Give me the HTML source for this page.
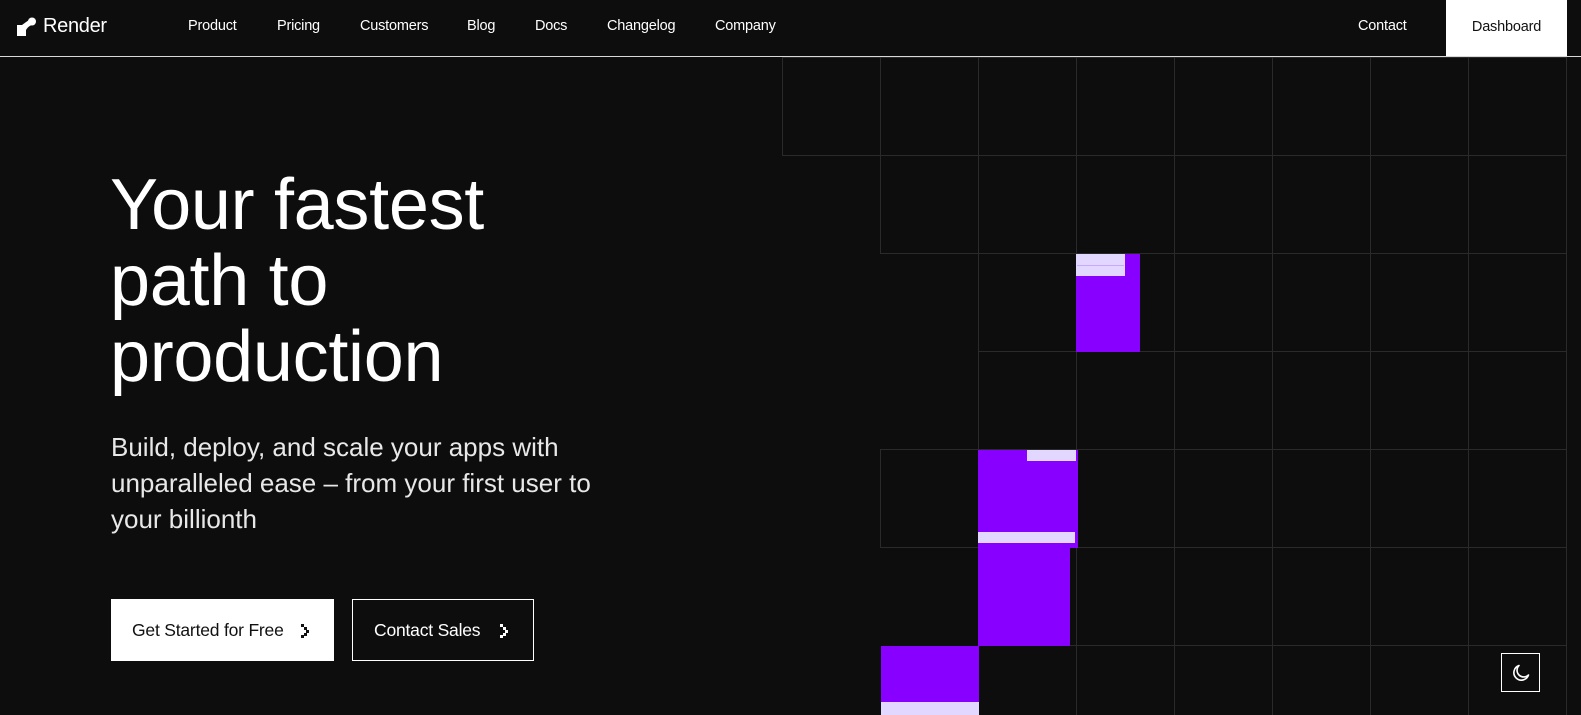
<!DOCTYPE html>
<html><head><meta charset="utf-8"><style>
*{margin:0;padding:0;box-sizing:border-box}
html,body{width:1581px;height:715px;overflow:hidden;background:#0d0d0d;font-family:"Liberation Sans",sans-serif}
#wrap{position:relative;width:1581px;height:715px;overflow:hidden}
.nav{position:absolute;left:0;top:0;width:1581px;height:57px;border-bottom:1px solid #d8d8d8;background:#0d0d0d;z-index:2}
.nav a{position:absolute;top:18px;color:#fff;font-size:14.5px;text-decoration:none;letter-spacing:-0.2px}
.dash{position:absolute;left:1446px;top:0;width:121px;height:56px;background:#fff;color:#111;font-size:14.5px;text-align:center;line-height:54px;letter-spacing:-0.2px}
.cell{position:absolute;width:99px;height:99px;border:1px solid #2a2a2a}
.p{position:absolute;background:#8800ff}
.l{position:absolute;background:#e2d8ff}
h1{position:absolute;left:110px;top:167px;color:#fff;font-weight:normal;font-size:72px;line-height:76px;letter-spacing:-0.3px}
.sub{position:absolute;left:111px;top:429px;color:#e8e8e8;font-size:26px;line-height:36px;letter-spacing:0px}
.btn{position:absolute;top:599px;height:62px;font-size:17.5px;line-height:62px;letter-spacing:-0.2px}
</style></head><body><div id="wrap">
<div class="nav">
<svg style="position:absolute;left:16px;top:17px" width="22" height="22" viewBox="0 0 22 22"><path d="M1 8h9v11H1z" fill="#fff"/><circle cx="16" cy="4.5" r="4" fill="#fff"/><path d="M6 8 Q10 5 13 3 L18 7 Q12 9 10 13z" fill="#fff"/></svg>
<a style="left:43px;top:15px;font-size:20px;letter-spacing:-0.3px">Render</a>
<a style="left:188px">Product</a>
<a style="left:277px">Pricing</a>
<a style="left:360px">Customers</a>
<a style="left:467px">Blog</a>
<a style="left:535px">Docs</a>
<a style="left:607px">Changelog</a>
<a style="left:715px">Company</a>
<a style="left:1358px">Contact</a>
<div class="dash">Dashboard</div>
</div>
<div id="grid"></div>
<div class="cell" style="left:782px;top:57px"></div>
<div class="cell" style="left:880px;top:57px"></div>
<div class="cell" style="left:880px;top:155px"></div>
<div class="cell" style="left:880px;top:449px"></div>
<script>
(function(){var h='';var rows=[57,155,253,351,449,547,645];var cols=[978,1076,1174,1272,1370,1468];
rows.forEach(function(r){cols.forEach(function(c){h+='<div class="cell" style="left:'+c+'px;top:'+r+'px"></div>';});});
document.getElementById('grid').innerHTML=h;})();
</script>
<div class="p" style="left:1076px;top:254px;width:64px;height:98px"></div>
<div class="l" style="left:1076px;top:254px;width:49px;height:22px"></div>
<div style="position:absolute;left:1077px;top:265px;width:47px;height:1px;background:#c9a8ff"></div>
<div class="p" style="left:978px;top:450px;width:100px;height:98px"></div>
<div class="l" style="left:1027px;top:450px;width:49px;height:11px"></div>
<div class="l" style="left:978px;top:532px;width:97px;height:11px"></div>
<div class="p" style="left:978px;top:548px;width:92px;height:98px"></div>
<div class="p" style="left:881px;top:646px;width:98px;height:70px"></div>
<div class="l" style="left:881px;top:702px;width:98px;height:13px"></div>
<h1>Your fastest<br>path to<br>production</h1>
<div class="sub">Build, deploy, and scale your apps with<br>unparalleled ease – from your first user to<br>your billionth</div>
<div class="btn" style="left:111px;width:223px;background:#fff;color:#111;padding-left:21px">Get Started for Free
<svg style="position:absolute;left:190px;top:25px" width="10" height="14"><rect x="0" y="0" width="3" height="3" fill="#111"/><rect x="3" y="3" width="3" height="3" fill="#111"/><rect x="5" y="6" width="3" height="3" fill="#111"/><rect x="3" y="9" width="3" height="3" fill="#111"/><rect x="0" y="11" width="3" height="3" fill="#111"/></svg></div>
<div class="btn" style="left:352px;width:182px;border:1px solid #fff;color:#fff;padding-left:21px;line-height:60px">Contact Sales
<svg style="position:absolute;left:147px;top:24px" width="10" height="14"><rect x="0" y="0" width="3" height="3" fill="#fff"/><rect x="3" y="3" width="3" height="3" fill="#fff"/><rect x="5" y="6" width="3" height="3" fill="#fff"/><rect x="3" y="9" width="3" height="3" fill="#fff"/><rect x="0" y="11" width="3" height="3" fill="#fff"/></svg></div>
<div style="position:absolute;left:1501px;top:653px;width:39px;height:39px;border:1.5px solid #fff;background:#0d0d0d">
<svg style="position:absolute;left:9px;top:9px" width="20" height="20" viewBox="0 0 20 20"><path d="M8 2.5A7.5 7.5 0 1 0 17.5 12 A6 6 0 0 1 8 2.5z" fill="none" stroke="#fff" stroke-width="1.6" stroke-linejoin="round"/></svg></div>
</div></body></html>
